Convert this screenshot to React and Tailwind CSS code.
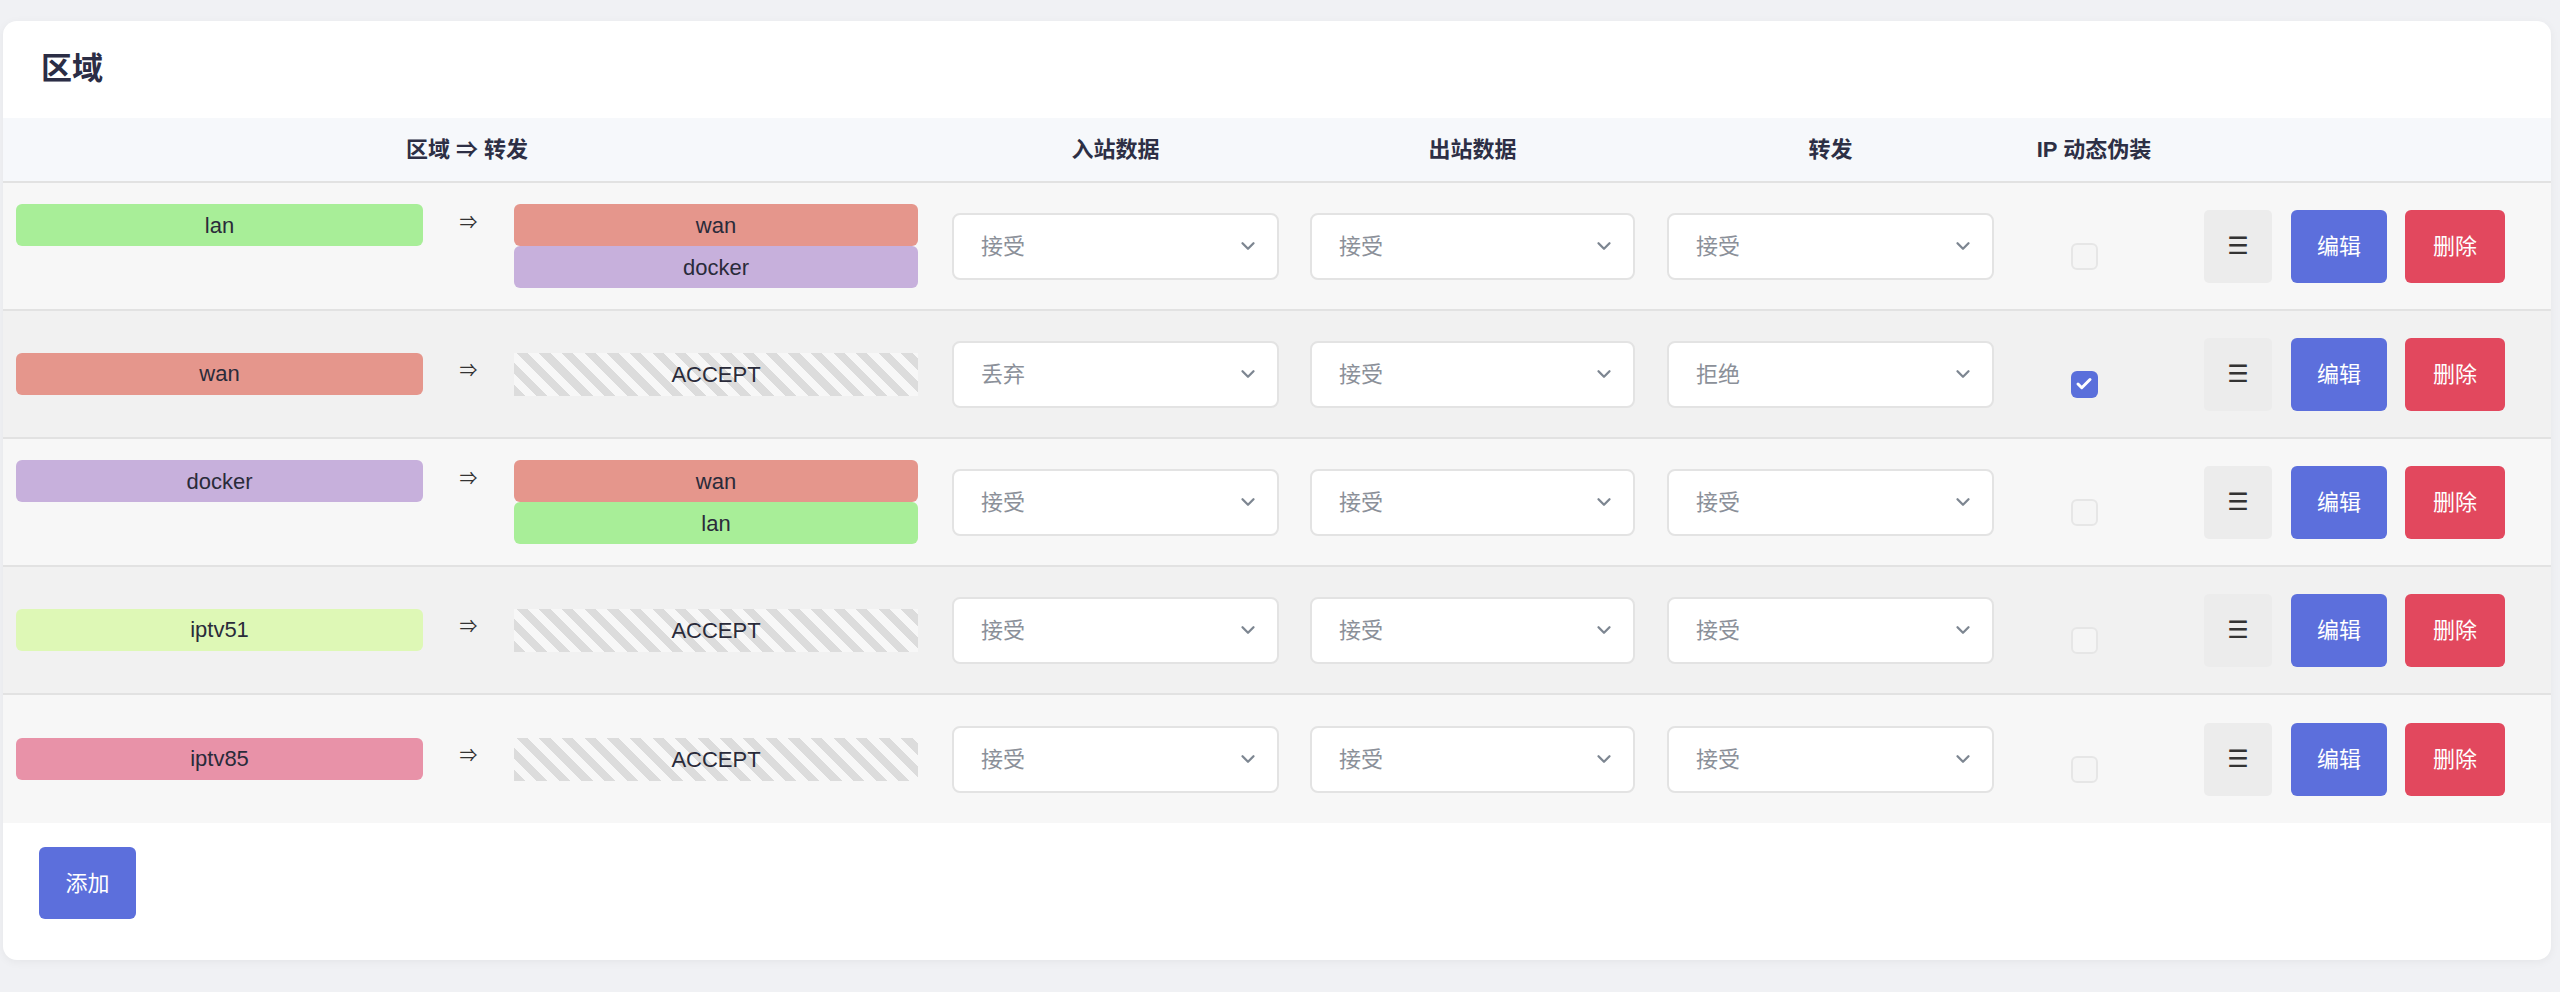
import { ChevronDown, Check } from 'lucide-react';

const C = {
  lan: '#a8ee98',
  wan: '#e5968c',
  docker: '#c7b0dc',
  iptv51: '#def8b6',
  iptv85: '#e892a8',
};

const rows = [
  { zone: 'lan', targets: ['wan', 'docker'], input: '接受', output: '接受', forward: '接受', masq: false },
  { zone: 'wan', targets: null, input: '丢弃', output: '接受', forward: '拒绝', masq: true },
  { zone: 'docker', targets: ['wan', 'lan'], input: '接受', output: '接受', forward: '接受', masq: false },
  { zone: 'iptv51', targets: null, input: '接受', output: '接受', forward: '接受', masq: false },
  { zone: 'iptv85', targets: null, input: '接受', output: '接受', forward: '接受', masq: false },
];

/* Fake select box: value on the left, chevron on the right. */
function SelectBox({ value, width }) {
  return (
    <div
      className={`${width} flex h-[67px] items-center justify-between rounded-[8px] border-2 border-[#e3e3e3] bg-white pl-[27px] pr-[18px]`}
    >
      <span className="text-[22px] text-[#8b9099]">{value}</span>
      <ChevronDown size={22} strokeWidth={2.5} className="text-[#7d8691]" />
    </div>
  );
}

function Tag({ name }) {
  return (
    <div
      className="flex h-[42px] items-center justify-center rounded-[6px] text-[22px] text-[#2a2b3a]"
      style={{ background: C[name] }}
    >
      {name}
    </div>
  );
}

function Row({ row, odd, last }) {
  return (
    <div
      className={`flex h-[128px] items-center pl-[13px] ${last ? '' : 'border-b-2 border-[#e2e2e2]'} ${
        odd ? 'bg-[#f7f7f7]' : 'bg-[#f1f1f1]'
      }`}
    >
      {/* zone ⇒ targets */}
      <div className="flex items-start">
        <div className="w-[407px]">
          <Tag name={row.zone} />
        </div>
        <div className="flex h-[38px] w-[91px] items-center justify-center text-[18px] text-[#333]">⇒</div>
        <div className="flex w-[404px] flex-col">
          {row.targets ? (
            row.targets.map((t) => <Tag key={t} name={t} />)
          ) : (
            <div className="flex h-[43px] items-center justify-center bg-[repeating-linear-gradient(45deg,#dcdcdc_0px,#dcdcdc_8px,#f7f7f7_8px,#f7f7f7_16px)] text-[22px] text-[#2a2b3a]">
              ACCEPT
            </div>
          )}
        </div>
      </div>

      <div className="ml-[34px]">
        <SelectBox value={row.input} width="w-[327px]" />
      </div>
      <div className="ml-[31px]">
        <SelectBox value={row.output} width="w-[325px]" />
      </div>
      <div className="ml-[32px]">
        <SelectBox value={row.forward} width="w-[327px]" />
      </div>

      <div className="flex w-[180px] justify-center pt-[20px]">
        {row.masq ? (
          <div className="flex h-[27px] w-[27px] items-center justify-center rounded-[6px] bg-[#5a6fdb]">
            <Check size={18} strokeWidth={4} className="text-white" />
          </div>
        ) : (
          <div className="h-[27px] w-[27px] rounded-[6px] border-2 border-[#e6e6e6] bg-[#f5f5f5]" />
        )}
      </div>

      <button
        type="button"
        className="ml-[30px] flex h-[73px] w-[68px] items-center justify-center rounded-[5px] bg-[#ececec] text-[24px] text-[#333]"
      >
        ☰
      </button>
      <button
        type="button"
        className="ml-[19px] flex h-[73px] w-[96px] items-center justify-center rounded-[6px] bg-[#5c6fdc] text-[22px] text-white"
      >
        编辑
      </button>
      <button
        type="button"
        className="ml-[18px] flex h-[73px] w-[100px] items-center justify-center rounded-[6px] bg-[#e2485e] text-[22px] text-white"
      >
        删除
      </button>
    </div>
  );
}

export default function App() {
  return (
    <div
      className="min-h-[992px] w-[2560px] bg-[#f0f1f4] pt-[21px]"
      style={{ fontFamily: '"Liberation Sans", "Noto Sans CJK SC", "DejaVu Sans", sans-serif' }}
    >
      <div className="ml-[3px] w-[2548px] overflow-hidden rounded-[14px] bg-white pb-[41px] shadow-[0_2px_10px_rgba(0,0,0,0.05)]">
        <div className="flex h-[97px] items-center pl-[38px]">
          <h2 className="text-[31px] font-bold text-[#2b2d45]">区域</h2>
        </div>

        {/* header */}
        <div className="flex h-[65px] items-center border-b-2 border-[#e2e2e2] bg-[#f6f8fb] pl-[13px] text-[22px] font-bold text-[#2d2f45]">
          <div className="w-[902px] text-center">区域 ⇒ 转发</div>
          <div className="ml-[34px] w-[327px] text-center">入站数据</div>
          <div className="ml-[31px] w-[325px] text-center">出站数据</div>
          <div className="ml-[32px] w-[327px] text-center">转发</div>
          <div className="w-[200px] text-center">IP 动态伪装</div>
        </div>

        {rows.map((row, i) => (
          <Row key={row.zone} row={row} odd={i % 2 === 0} last={i === rows.length - 1} />
        ))}

        <button
          type="button"
          className="ml-[36px] mt-[24px] flex h-[72px] w-[97px] items-center justify-center rounded-[6px] bg-[#5c6fdc] text-[22px] text-white"
        >
          添加
        </button>
      </div>
    </div>
  );
}
